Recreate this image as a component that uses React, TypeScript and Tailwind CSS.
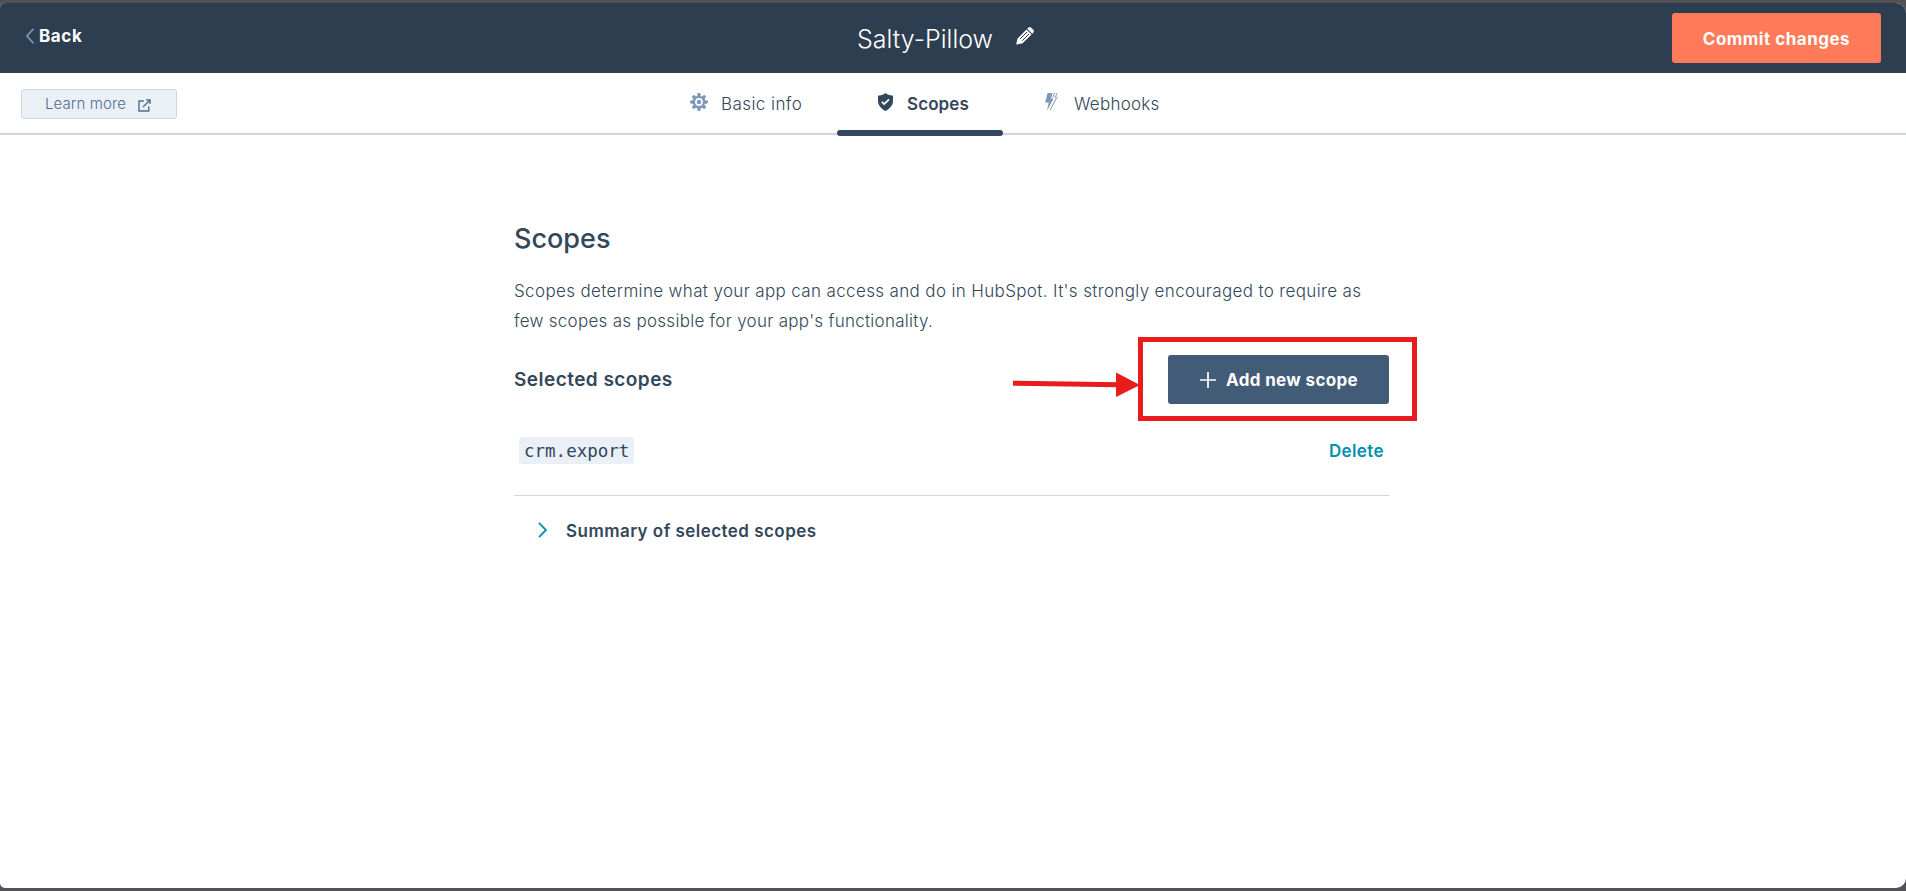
import React from 'react';

function Gear() {
  return (
    <svg width="18" height="18" viewBox="0 0 18 18" className="shrink-0">
      <g fill="#7c98b6">
        {[0, 45, 90, 135, 180, 225, 270, 315].map((a) => (
          <rect key={a} x="7.3" y="0.1" width="3.4" height="4.4" rx="1.4" transform={`rotate(${a} 9 9)`} />
        ))}
      </g>
      <circle cx="9" cy="9" r="5.1" fill="#fff" stroke="#7c98b6" strokeWidth="2.4" />
      <circle cx="9" cy="9" r="2.2" fill="#7c98b6" />
    </svg>
  );
}

function Shield() {
  return (
    <svg width="15" height="18" viewBox="0 0 15 18" className="shrink-0">
      <path d="M7.5 0C9 1.5 11.5 2.4 14.2 2.6C14.8 2.7 15 3 15 3.6V8C15 12.6 11.5 15.8 7.5 18C3.5 15.8 0 12.6 0 8V3.6C0 3 .2 2.7.8 2.6C3.5 2.4 6 1.5 7.5 0Z" fill="#33475b" />
      <path d="M3.8 8.800L6.200 11L11 6.400" fill="none" stroke="#fff" strokeWidth="1.700" />
    </svg>
  );
}

function Bolt() {
  return (
    <svg width="13" height="18" viewBox="0 0 13 18" className="shrink-0">
      <path d="M2.6 0H7.6L5.900 5.600H8.600L2 17.800L3.700 9.400H.2Z" fill="#7c98b6" />
      <path d="M9.800 0L7.500 4.500M12.300 3.600L5 17.200M12.200 .2L9.800 5" stroke="#7c98b6" strokeWidth="1" fill="none" />
    </svg>
  );
}

function Pencil() {
  return (
    <svg width="18" height="18" viewBox="0 0 18 18" className="shrink-0">
      <path d="M1 17.600C.5 17.700.2 17.400.3 16.900L1.600 11.400L10.500 2.500L15.500 7.500L6.600 16.300Z" fill="#fff" />
      <path d="M11.200 1.800L12.200.8C13.200-.1 14.300-.1 15.200.7L17.300 2.800C18.100 3.700 18.100 4.800 17.200 5.800L16.200 6.800Z" fill="#fff" />
      <path d="M4.200 11.800L11 5M6.200 13.800L13 7" stroke="#2d3e50" strokeWidth="1" />
    </svg>
  );
}

export default function App() {
  return (
    <div className="flex h-[891px] w-[1906px] flex-col overflow-hidden bg-[#515156] py-[3px] font-['Inter','Open_Sans',sans-serif] text-[#33475b]">
      <div className="flex flex-1 flex-col overflow-hidden rounded-l-[5px] rounded-r-[10px] bg-white">
        <header className="flex h-[70px] shrink-0 bg-[#2d3e50] text-white">
          <a className="flex h-[66px] w-[857px] items-center pl-[26px]">
            <svg width="8" height="16" viewBox="0 0 8 16" className="mr-[5px]">
              <path d="M7.500.8L1 8L7.500 15.200" fill="none" stroke="#7c98b6" strokeWidth="1.700" />
            </svg>
            <span className="text-[17px] leading-[24px] font-bold tracking-[0.6px]">Back</span>
          </a>
          <div className="flex items-start">
            <h1 className="mt-[18px] text-[25px] leading-[36px] font-light whitespace-nowrap">Salty-Pillow</h1>
            <span className="mt-[24px] ml-[23px]"><Pencil /></span>
          </div>
          <div className="flex flex-1 justify-end pt-[10px] pr-[25px]">
            <button className="h-[50px] w-[209px] rounded-[3px] bg-[#ff7a59] pt-[3px] text-[17px] font-bold tracking-[0.5px]">Commit changes</button>
          </div>
        </header>
        <nav className="flex h-[62px] shrink-0 border-b-2 border-[#cbd6e2]">
          <button className="mt-4 ml-[21px] flex h-[30px] w-[156px] items-center rounded-[3px] border border-[#cbd6e2] bg-[#eaf0f6] pl-[23px] text-[15px] font-light text-[#506e91]">
            <span className="w-[93px] text-left tracking-[0.1px]">Learn more</span>
            <svg width="13" height="13" viewBox="0 0 13 13" className="mt-[2px]">
              <path d="M5.800 2H1V12H10.800V7.500M8 .9H12V5M11.800 1.200L5 8" fill="none" stroke="#506e91" strokeWidth="1.400" />
            </svg>
          </button>
          <div className="ml-[513px] flex h-[48px] pt-[20px] text-[17px] leading-[22px] font-light">
            <div className="flex w-[147px]"><Gear /><span className="ml-[13px] tracking-[0.43px]">Basic info</span></div>
            <div className="relative -mt-[20px] flex h-[63px] w-[166px] pt-[20px] pl-[41px] font-semibold">
              <Shield /><span className="ml-[14px] tracking-[0.1px]">Scopes</span>
              <span className="absolute bottom-0 left-0 h-[6px] w-[166px] rounded-full bg-[#33475b]" />
            </div>
            <div className="flex pl-[42px]"><Bolt /><span className="ml-[16px] tracking-[0.25px]">Webhooks</span></div>
          </div>
        </nav>
        <main className="ml-[514px] flex w-[875px] flex-col">
          <h2 className="mt-[86px] text-[27px] leading-[36px] font-medium">Scopes</h2>
          <p className="mt-[19px] text-[17px] leading-[30px] font-light tracking-[0.355px] whitespace-nowrap">
            Scopes determine what your app can access and do in HubSpot. It's strongly encouraged to require as<br />
            <span className="tracking-[0.28px]">few scopes as possible for your app's functionality.</span>
          </p>
          <div className="mt-[19px] flex h-[49px] items-center justify-between">
            <h3 className="pt-[2px] text-[19px] font-semibold tracking-[0.46px]">Selected scopes</h3>
            <div className="relative">
              <button className="flex h-[49px] w-[221px] items-center rounded-[3px] bg-[#425b76] pl-8 text-[17px] font-bold text-white">
                <svg width="16" height="16" viewBox="0 0 16 16" className="mr-[10px]">
                  <path d="M8 0V16M0 8H16" stroke="#fff" strokeWidth="1.700" />
                </svg>
                <span className="pt-[2px] tracking-[0.35px] whitespace-nowrap">Add new scope</span>
              </button>
              <span className="absolute -top-[18px] -left-[30px] h-[84px] w-[279px] border-[5px] border-[#e81c1c]" />
              <svg className="absolute top-[16px] -left-[155px]" width="128" height="28" viewBox="0 0 128 28">
                <path d="M0 12.300L106 13.800" stroke="#e81c1c" strokeWidth="5" />
                <path d="M103 1.500L127 14L103 26Z" fill="#e81c1c" />
              </svg>
            </div>
          </div>
          <div className="mt-[33px] flex h-[27px] items-center justify-between pr-[5px] pl-[5px]">
            <code className="h-[27px] rounded-[3px] bg-[#eaf0f6] px-[5px] font-['DejaVu_Sans_Mono',monospace] text-[17.5px] leading-[29px]">crm.export</code>
            <a className="pt-[2px] text-[17px] font-semibold tracking-[0.4px] text-[#0091ae]">Delete</a>
          </div>
          <div className="mt-[31px] flex border-t border-[#cbd6e2] pt-[24px] pl-[24px]">
            <svg width="10" height="16" viewBox="0 0 10 16" className="mt-[2px]">
              <path d="M1 .8L8 8L1 15.200" fill="none" stroke="#0091ae" strokeWidth="1.800" />
            </svg>
            <span className="ml-[18px] text-[17px] leading-[22px] font-semibold tracking-[0.46px]">Summary of selected scopes</span>
          </div>
        </main>
      </div>
    </div>
  );
}
